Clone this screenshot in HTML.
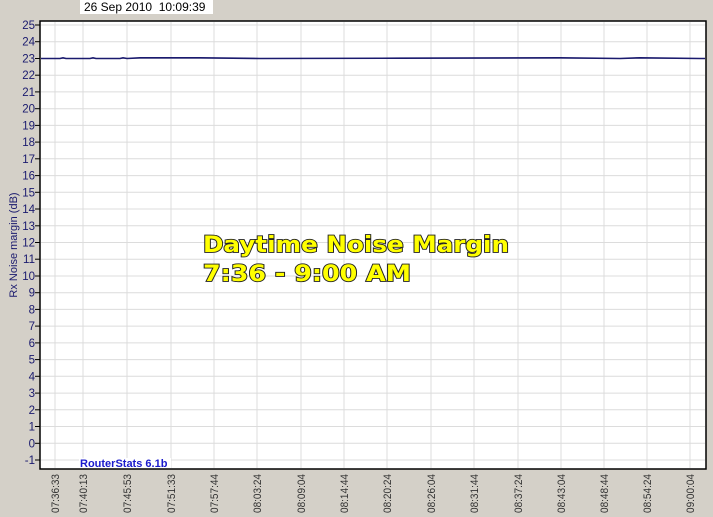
<!DOCTYPE html>
<html><head><style>
html,body{margin:0;padding:0;background:#d4d0c8;}
svg{display:block;}
</style></head><body>
<svg width="713" height="517" xmlns="http://www.w3.org/2000/svg" font-family="Liberation Sans, Arial, sans-serif">
<rect width="713" height="517" fill="#d4d0c8"/>
<rect x="80" y="0" width="133" height="14" fill="#fff"/>
<text x="84" y="11" font-size="12" fill="#000">26 Sep 2010 &#160;10:09:39</text>
<rect x="40" y="21" width="666" height="448" fill="#fff" stroke="#000" stroke-width="1.5"/>
<g stroke="#dcdcdc" stroke-width="1">
<line x1="41" x2="705" y1="25" y2="25"/><line x1="41" x2="705" y1="41.7" y2="41.7"/><line x1="41" x2="705" y1="58.5" y2="58.5"/><line x1="41" x2="705" y1="75.2" y2="75.2"/><line x1="41" x2="705" y1="91.9" y2="91.9"/><line x1="41" x2="705" y1="108.7" y2="108.7"/><line x1="41" x2="705" y1="125.4" y2="125.4"/><line x1="41" x2="705" y1="142.1" y2="142.1"/><line x1="41" x2="705" y1="158.8" y2="158.8"/><line x1="41" x2="705" y1="175.6" y2="175.6"/><line x1="41" x2="705" y1="192.3" y2="192.3"/><line x1="41" x2="705" y1="209" y2="209"/><line x1="41" x2="705" y1="225.8" y2="225.8"/><line x1="41" x2="705" y1="242.5" y2="242.5"/><line x1="41" x2="705" y1="259.2" y2="259.2"/><line x1="41" x2="705" y1="276" y2="276"/><line x1="41" x2="705" y1="292.7" y2="292.7"/><line x1="41" x2="705" y1="309.4" y2="309.4"/><line x1="41" x2="705" y1="326.1" y2="326.1"/><line x1="41" x2="705" y1="342.9" y2="342.9"/><line x1="41" x2="705" y1="359.6" y2="359.6"/><line x1="41" x2="705" y1="376.3" y2="376.3"/><line x1="41" x2="705" y1="393.1" y2="393.1"/><line x1="41" x2="705" y1="409.8" y2="409.8"/><line x1="41" x2="705" y1="426.5" y2="426.5"/><line x1="41" x2="705" y1="443.3" y2="443.3"/><line x1="41" x2="705" y1="460" y2="460"/>
<line y1="22" y2="468" x1="55" x2="55"/><line y1="22" y2="468" x1="83" x2="83"/><line y1="22" y2="468" x1="127" x2="127"/><line y1="22" y2="468" x1="171" x2="171"/><line y1="22" y2="468" x1="214" x2="214"/><line y1="22" y2="468" x1="257" x2="257"/><line y1="22" y2="468" x1="301" x2="301"/><line y1="22" y2="468" x1="344" x2="344"/><line y1="22" y2="468" x1="387" x2="387"/><line y1="22" y2="468" x1="431" x2="431"/><line y1="22" y2="468" x1="474" x2="474"/><line y1="22" y2="468" x1="518" x2="518"/><line y1="22" y2="468" x1="561" x2="561"/><line y1="22" y2="468" x1="604" x2="604"/><line y1="22" y2="468" x1="647" x2="647"/><line y1="22" y2="468" x1="690" x2="690"/>
</g>
<path d="M41 58.5 L60 58.5 L63 57.8 L66 58.5 L90 58.5 L93 57.8 L96 58.5 L120 58.5 L123 57.8 L127 58.5 L140 57.8 L200 57.8 L260 58.5 L400 58.2 L560 57.8 L620 58.5 L640 57.8 L700 58.5 L705 58.5" fill="none" stroke="#1a1a6e" stroke-width="1.6"/>
<g stroke="#000" stroke-width="1">
<line x1="35" x2="40" y1="25" y2="25"/><line x1="35" x2="40" y1="41.7" y2="41.7"/><line x1="35" x2="40" y1="58.5" y2="58.5"/><line x1="35" x2="40" y1="75.2" y2="75.2"/><line x1="35" x2="40" y1="91.9" y2="91.9"/><line x1="35" x2="40" y1="108.7" y2="108.7"/><line x1="35" x2="40" y1="125.4" y2="125.4"/><line x1="35" x2="40" y1="142.1" y2="142.1"/><line x1="35" x2="40" y1="158.8" y2="158.8"/><line x1="35" x2="40" y1="175.6" y2="175.6"/><line x1="35" x2="40" y1="192.3" y2="192.3"/><line x1="35" x2="40" y1="209" y2="209"/><line x1="35" x2="40" y1="225.8" y2="225.8"/><line x1="35" x2="40" y1="242.5" y2="242.5"/><line x1="35" x2="40" y1="259.2" y2="259.2"/><line x1="35" x2="40" y1="276" y2="276"/><line x1="35" x2="40" y1="292.7" y2="292.7"/><line x1="35" x2="40" y1="309.4" y2="309.4"/><line x1="35" x2="40" y1="326.1" y2="326.1"/><line x1="35" x2="40" y1="342.9" y2="342.9"/><line x1="35" x2="40" y1="359.6" y2="359.6"/><line x1="35" x2="40" y1="376.3" y2="376.3"/><line x1="35" x2="40" y1="393.1" y2="393.1"/><line x1="35" x2="40" y1="409.8" y2="409.8"/><line x1="35" x2="40" y1="426.5" y2="426.5"/><line x1="35" x2="40" y1="443.3" y2="443.3"/><line x1="35" x2="40" y1="460" y2="460"/>
</g>
<g font-size="11.5" fill="#1a1a6e" text-anchor="end">
<text x="35" y="29">25</text><text x="35" y="45.7">24</text><text x="35" y="62.5">23</text><text x="35" y="79.2">22</text><text x="35" y="95.9">21</text><text x="35" y="112.7">20</text><text x="35" y="129.4">19</text><text x="35" y="146.1">18</text><text x="35" y="162.8">17</text><text x="35" y="179.6">16</text><text x="35" y="196.3">15</text><text x="35" y="213">14</text><text x="35" y="229.8">13</text><text x="35" y="246.5">12</text><text x="35" y="263.2">11</text><text x="35" y="280">10</text><text x="35" y="296.7">9</text><text x="35" y="313.4">8</text><text x="35" y="330.1">7</text><text x="35" y="346.9">6</text><text x="35" y="363.6">5</text><text x="35" y="380.3">4</text><text x="35" y="397.1">3</text><text x="35" y="413.8">2</text><text x="35" y="430.5">1</text><text x="35" y="447.3">0</text><text x="35" y="464">-1</text>
</g>
<text transform="translate(17,245) rotate(-90)" font-size="11" fill="#1a1a6e" text-anchor="middle">Rx Noise margin (dB)</text>
<g font-size="11" fill="#333" text-anchor="end">
<text transform="translate(59,474) rotate(-90)" textLength="39" lengthAdjust="spacingAndGlyphs">07:36:33</text><text transform="translate(87,474) rotate(-90)" textLength="39" lengthAdjust="spacingAndGlyphs">07:40:13</text><text transform="translate(131,474) rotate(-90)" textLength="39" lengthAdjust="spacingAndGlyphs">07:45:53</text><text transform="translate(175,474) rotate(-90)" textLength="39" lengthAdjust="spacingAndGlyphs">07:51:33</text><text transform="translate(218,474) rotate(-90)" textLength="39" lengthAdjust="spacingAndGlyphs">07:57:44</text><text transform="translate(261,474) rotate(-90)" textLength="39" lengthAdjust="spacingAndGlyphs">08:03:24</text><text transform="translate(305,474) rotate(-90)" textLength="39" lengthAdjust="spacingAndGlyphs">08:09:04</text><text transform="translate(348,474) rotate(-90)" textLength="39" lengthAdjust="spacingAndGlyphs">08:14:44</text><text transform="translate(391,474) rotate(-90)" textLength="39" lengthAdjust="spacingAndGlyphs">08:20:24</text><text transform="translate(435,474) rotate(-90)" textLength="39" lengthAdjust="spacingAndGlyphs">08:26:04</text><text transform="translate(478,474) rotate(-90)" textLength="39" lengthAdjust="spacingAndGlyphs">08:31:44</text><text transform="translate(522,474) rotate(-90)" textLength="39" lengthAdjust="spacingAndGlyphs">08:37:24</text><text transform="translate(565,474) rotate(-90)" textLength="39" lengthAdjust="spacingAndGlyphs">08:43:04</text><text transform="translate(608,474) rotate(-90)" textLength="39" lengthAdjust="spacingAndGlyphs">08:48:44</text><text transform="translate(651,474) rotate(-90)" textLength="39" lengthAdjust="spacingAndGlyphs">08:54:24</text><text transform="translate(694,474) rotate(-90)" textLength="39" lengthAdjust="spacingAndGlyphs">09:00:04</text>
</g>
<rect x="79" y="458" width="92" height="10" fill="#fff"/>
<text x="80" y="467" font-size="11" font-weight="bold" fill="#1a1acc">RouterStats 6.1b</text>
<g font-family="DejaVu Sans, Verdana, sans-serif" font-weight="bold" font-size="22.5" fill="#ffff00" stroke="#222" stroke-width="1.8" paint-order="stroke">
<text x="203" y="252" textLength="306" lengthAdjust="spacingAndGlyphs">Daytime Noise Margin</text>
<text x="203" y="281" textLength="208" lengthAdjust="spacingAndGlyphs">7:36 - 9:00 AM</text>
</g>
</svg>
</body></html>
